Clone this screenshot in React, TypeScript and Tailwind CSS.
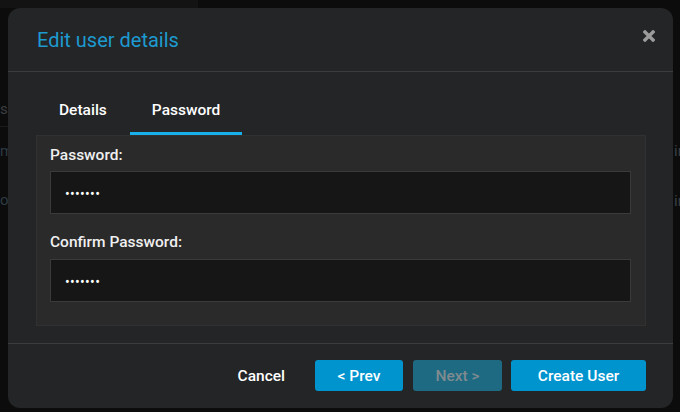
import React from "react";

export default function App() {
  return (
    <div
      className="relative w-[680px] h-[412px] overflow-hidden bg-[#0c0c0c]"
      style={{ fontFamily: "Roboto, 'Liberation Sans', sans-serif" }}
    >
      {/* faint background content */}
      <div className="absolute left-0 top-0 w-[198px] h-[8px] bg-[#131313]" />
      <div className="absolute left-0 top-[98px] text-[15px] text-[#3a3f42]">se</div>
      <div className="absolute left-0 top-[140px] text-[15px] text-[#2c3a44]">m</div>
      <div className="absolute left-0 top-[189px] text-[15px] text-[#2c3a44]">or</div>
      <div className="absolute left-0 top-[126px] w-[8px] h-px bg-[#1c1c1c]" />
      <div className="absolute left-[674px] top-[140px] w-[6px] overflow-hidden text-[15px] text-[#3a3f42]">in</div>
      <div className="absolute left-[674px] top-[190px] w-[6px] overflow-hidden text-[15px] text-[#3a3f42]">in</div>

      {/* modal */}
      <div className="absolute left-[8px] top-[8px] w-[665px] h-[400px] rounded-[12px] bg-[#232526] flex flex-col">
        <div className="h-[63px] flex items-center justify-between pl-[29px] pr-[18px] border-b border-[#3b3d3e] box-content">
          <div className="text-[20px] leading-[24px] text-[#1d9ad0] pt-[1px]">Edit user details</div>
          <svg width="12" height="12" viewBox="0 0 12 12" className="mt-[-8px]">
            <path d="M2 2 L10 10 M10 2 L2 10" stroke="#9b9b9b" strokeWidth="3.4" strokeLinecap="square" />
          </svg>
        </div>

        <div className="flex ml-[29px] gap-[1px] h-[63px]">
          <div className="h-[63px] pt-[28px] px-[22px] text-[15.5px] leading-[20px] font-medium text-white border-b-[3px] border-transparent">
            Details
          </div>
          <div className="h-[63px] pt-[28px] px-[22px] text-[15.5px] leading-[20px] font-medium text-white border-b-[3px] border-[#17b0ea]">
            Password
          </div>
        </div>

        <div className="ml-[28px] w-[610px] h-[191px] bg-[#2a2a2a] border border-[#313131] px-[13px] pt-[9px]">
          <div className="text-[15.5px] leading-[20px] font-medium text-[#f0f0f0]">Password:</div>
          <div className="mt-[6px] h-[43px] w-[581px] bg-[#161616] border border-[#3a3a3a] flex items-center pl-[14px] pt-[3px] text-white text-[14px] tracking-[0.3px]">
            •••••••
          </div>
          <div className="mt-[18px] text-[15.5px] leading-[20px] font-medium text-[#f0f0f0]">Confirm Password:</div>
          <div className="mt-[7px] h-[43px] w-[581px] bg-[#161616] border border-[#3a3a3a] flex items-center pl-[14px] pt-[3px] text-white text-[14px] tracking-[0.3px]">
            •••••••
          </div>
        </div>

        <div className="mt-[17px] border-t border-[#3b3d3e] flex-1 flex items-center justify-end pr-[27px] pb-[1px]">
          <button className="text-[15.5px] font-medium text-white mr-[30px] pt-[2px]">Cancel</button>
          <button className="w-[88px] h-[31px] rounded-[3px] bg-[#0094cf] text-[15.5px] font-medium text-white pt-[2px]">
            &lt; Prev
          </button>
          <button className="ml-[10px] w-[89px] h-[31px] rounded-[3px] bg-[#1e6a82] text-[15.5px] font-medium text-[#7f8b90] pt-[2px]">
            Next &gt;
          </button>
          <button className="ml-[9px] w-[135px] h-[31px] rounded-[3px] bg-[#0094cf] text-[15.5px] font-medium text-white pt-[2px]">
            Create User
          </button>
        </div>
      </div>
    </div>
  );
}
